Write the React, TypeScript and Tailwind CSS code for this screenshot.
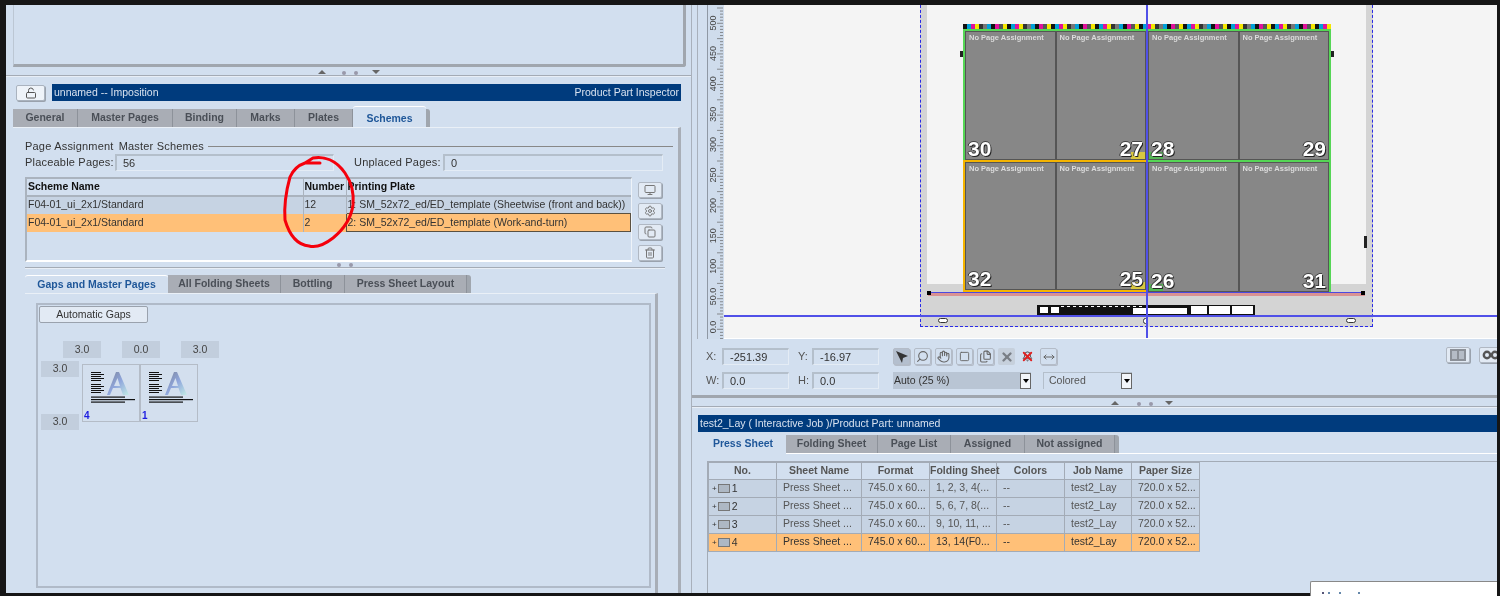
import React from "react";
import { LockOpen, Monitor, Settings, Copy, Trash2, Search, Hand, Square, Files, X, Bell, MoveHorizontal } from "lucide-react";

const pressRows = [
    { no: 1, fold: "1, 2, 3, 4(..." },
    { no: 2, fold: "5, 6, 7, 8(..." },
    { no: 3, fold: "9, 10, 11, ..." },
    { no: 4, fold: "13, 14(F0...", selected: true },
];

const rulerLabels = ["500", "450", "400", "350", "300", "250", "200", "150", "100", "50.0", "0.0"];
const barColors = ["#111", "#00a0d8", "#e0109a", "#f5e600", "#333", "#777", "#00a0d8", "#111", "#e0109a", "#555", "#f5e600"];

function Field({ className, children }: { className: string; children?: React.ReactNode }) {
    return (
        <div className={`flex h-[17px] items-center border-t-2 border-l-2 border-t-[#b4bfcb] border-l-[#b4bfcb] border-b border-r border-b-[#e4ecf5] border-r-[#e4ecf5] pl-1.5 text-[11px] text-[#333] ${className}`}>
            {children}
        </div>
    );
}

function Tab({ label, width, active }: { label: string; width: string; active?: boolean }) {
    if (active) {
        return (
            <div className={`relative flex h-[21px] items-center justify-center rounded-t-[3px] border-t border-white bg-[#d2dfef] pt-[3px] text-[10.5px] font-bold text-[#1f5799] ${width}`}>
                {label}
            </div>
        );
    }
    return (
        <div className={`flex h-[18px] items-center justify-center border-r border-[#8d929a] bg-[#a9adb5] text-[10.5px] font-bold text-[#4a4f57] ${width}`}>
            {label}
        </div>
    );
}

function Splitter({ className, up, dots, down }: { className: string; up: string; dots: string; down: string }) {
    return (
        <div className={`relative ${className}`}>
            <div className="absolute top-[8px] right-0 left-0 h-[2px] border-t border-[#a4abb5] bg-[#e8eef6]" />
            <div className={`absolute top-[3px] h-0 w-0 border-r-[4px] border-b-[4px] border-l-[4px] border-r-transparent border-b-[#666] border-l-transparent ${up}`} />
            <div className={`absolute top-[4px] h-[2px] w-[16px] border-x-4 border-dotted border-[#99a] ${dots}`} />
            <div className={`absolute top-[3px] h-0 w-0 border-t-[4px] border-r-[4px] border-l-[4px] border-t-[#666] border-r-transparent border-l-transparent ${down}`} />
        </div>
    );
}

function IconButton({ children, className = "" }: { children: React.ReactNode; className?: string }) {
    return (
        <div className={`flex h-[17px] w-[17px] items-center justify-center rounded-[2px] border border-[#b4bcc8] text-[#666] shadow-[1px_1px_0_#b4bcc8] ${className}`}>
            {children}
        </div>
    );
}

function SideButton({ children }: { children: React.ReactNode }) {
    return (
        <div className="flex h-[16px] w-[24px] items-center justify-center rounded-[2px] border border-[#b0b8c3] bg-[#e2eaf4] text-[#777] shadow-[1px_1px_0_#9aa2ad]">
            {children}
        </div>
    );
}

function Thumb({ n }: { n: number }) {
    return (
        <div className="relative h-[58px] w-[58px] border border-[#b4bcc7] bg-[#d3dfee]">
            <svg className="absolute top-[5px] left-[7px]" width="46" height="36" viewBox="0 0 46 36">
                <defs>
                    <linearGradient id={`a${n}`} x1="0" y1="0" x2="1" y2="1">
                        <stop offset="0" stopColor="#7c8398" />
                        <stop offset="0.5" stopColor="#8fa6dc" />
                        <stop offset="1" stopColor="#c4ecE6" />
                    </linearGradient>
                </defs>
                <path d="M26 2 L29 2 L39 25 L33 25 L30.5 18 L23 18 L20 25 L17 25 Z M24 16 L30 16 L27.5 8 Z" fill={`url(#a${n})`} fillRule="evenodd" />
                <g fill="#111">
                    {[2, 4, 6, 8, 10, 14, 16, 18, 20, 22].map(y => (
                        <rect key={y} x="1" y={y} width={y % 4 === 0 ? 13 : 10} height="1" />
                    ))}
                    {[26.5, 29, 31.5].map(y => (
                        <rect key={y} x="1" y={y} width={y === 29 ? 44 : 34} height="1.2" />
                    ))}
                </g>
            </svg>
            <span className="absolute bottom-0 left-[1px] text-[10px] leading-[11px] font-bold text-[#1c1ce0]">{n}</span>
        </div>
    );
}

function Page({ num, right, corner }: { num: number; right?: boolean; corner?: string }) {
    return (
        <div className="relative h-full flex-1 border border-[#555] bg-[#878787]">
            <div className="pt-[1px] pl-[3px] text-[7.5px] leading-[9px] font-bold whitespace-nowrap text-[#dcdcdc]">No Page Assignment</div>
            {corner && (
                <div className={`absolute bottom-0 h-[7px] w-[14px] ${corner} ${right ? "right-0" : "left-0"}`} />
            )}
            <div className={`absolute bottom-[-1px] text-[21px] leading-[23px] font-bold text-white [text-shadow:1px_1px_0_#222,-1px_0_0_#333,0_-1px_0_#444] ${right ? "right-[2px]" : "left-[2px]"}`}>
                {num}
            </div>
        </div>
    );
}

function Block({ a, b, border, ca, cb }: { a: number; b: number; border: string; ca?: string; cb?: string }) {
    return (
        <div className={`flex h-full flex-1 ${border}`}>
            <Page num={a} corner={ca} />
            <Page num={b} right corner={cb} />
        </div>
    );
}

export default function App() {
    return (
        <div className="h-[596px] w-[1500px] overflow-hidden bg-[#161616] pt-[5px] pr-[3px] pb-[3px] pl-[6px] font-['Liberation_Sans',Arial,sans-serif] blur-[0.45px]">
            <div className="relative flex h-full bg-[#d2dfef]">
                {/* Left: imposition inspector */}
                <div className="h-full w-[685px] shrink-0 overflow-hidden pl-[7px]">
                    <div className="h-[62px] w-[673px] rounded-br-[3px] border-r-[3px] border-b-[3px] border-l border-[#a0a6ae] border-l-[#bcc7d4]" />
                    <Splitter className="-ml-[7px] h-[17px]" up="left-[312px]" dots="left-[336px]" down="left-[366px]" />

                    <div className="flex h-[17px] items-center">
                        <div className="ml-[3px] flex h-[16px] w-[29px] items-center justify-center rounded-[2px] border border-[#aab3bf] bg-[#eef3f9] text-[#555] shadow-[1px_1px_0_#9aa2ad]">
                            <LockOpen size={12} />
                        </div>
                        <div className="ml-[7px] flex h-[17px] w-[629px] items-center justify-between bg-[#003b7d] px-[2px] text-[10.5px] text-[#d8e2ef]">
                            <span>unnamed -- Imposition</span>
                            <span>Product Part Inspector</span>
                        </div>
                    </div>

                    <div className="mt-[5px] flex h-[21px] items-end">
                        <Tab label="General" width="w-[65px]" />
                        <Tab label="Master Pages" width="w-[95px]" />
                        <Tab label="Binding" width="w-[64px]" />
                        <Tab label="Marks" width="w-[58px]" />
                        <Tab label="Plates" width="w-[58px]" />
                        <Tab label="Schemes" width="w-[73px]" active />
                        <div className="h-[18px] w-[4px] rounded-tr-[3px] bg-[#a0a6ae]" />
                    </div>

                    <div className="h-[470px] w-[668px] border-t border-r-[3px] border-t-[#eaf0f7] border-r-[#a8aeb7] pl-[12px]">
                        <div className="mt-[12px] flex h-[12px] items-center text-[11px] tracking-[0.2px] text-[#333]">
                            <span>Page Assignment</span>
                            <span className="ml-[5px]">Master Schemes</span>
                            <div className="ml-[4px] h-px w-[465px] bg-[#888]" />
                        </div>

                        <div className="mt-[2px] flex h-[17px] items-center text-[11px] text-[#333]">
                            <span className="w-[90px] tracking-[0.2px]">Placeable Pages:</span>
                            <Field className="w-[219px]">56</Field>
                            <span className="ml-[20px] w-[89px] tracking-[0.2px]">Unplaced Pages:</span>
                            <Field className="w-[220px]">0</Field>
                        </div>

                        <div className="mt-[6px] flex">
                            <div className="h-[85px] w-[607px] border-t-2 border-l-2 border-t-[#aab3be] border-l-[#aab3be] border-r border-b-2 border-r-[#eef3f9] border-b-white">
                                <table className="w-full table-fixed border-collapse text-[10.5px] text-[#333]">
                                    <colgroup>
                                        <col className="w-[276px]" />
                                        <col className="w-[43px]" />
                                        <col />
                                    </colgroup>
                                    <thead>
                                        <tr className="h-[16px] border-b-2 border-[#aab3be] text-left font-bold text-[#111]">
                                            <th className="pl-[1px]">Scheme Name</th>
                                            <th className="border-l border-[#aab3be] pl-[1px]">Number</th>
                                            <th className="border-l border-[#aab3be] pl-[1px]">Printing Plate</th>
                                        </tr>
                                    </thead>
                                    <tbody>
                                        <tr className="h-[18px] bg-[#c6d3e3]">
                                            <td className="pl-[1px]">F04-01_ui_2x1/Standard</td>
                                            <td className="border-l border-[#aab3be] pl-[1px]">12</td>
                                            <td className="border-l border-[#aab3be] pl-[1px]">1: SM_52x72_ed/ED_template (Sheetwise (front and back))</td>
                                        </tr>
                                        <tr className="h-[18px] bg-[#ffc078]">
                                            <td className="pl-[1px]">F04-01_ui_2x1/Standard</td>
                                            <td className="border-l border-[#aab3be] pl-[1px]">2</td>
                                            <td className="border border-[#5a5040] pl-[1px]">2: SM_52x72_ed/ED_template (Work-and-turn)</td>
                                        </tr>
                                    </tbody>
                                </table>
                            </div>
                            <div className="mt-[5px] ml-[6px] flex flex-col gap-[5px]">
                                <SideButton><Monitor size={12} /></SideButton>
                                <SideButton><Settings size={12} /></SideButton>
                                <SideButton><Copy size={12} /></SideButton>
                                <SideButton><Trash2 size={12} /></SideButton>
                            </div>
                        </div>

                        <div className="relative h-[13px] w-[640px]">
                            <div className="absolute top-[5px] right-0 left-0 h-[2px] border-t border-[#a4abb5] bg-[#e8eef6]" />
                            <div className="absolute top-[1px] left-[312px] h-[2px] w-[16px] border-x-4 border-dotted border-[#99a]" />
                        </div>

                        <div className="flex h-[18px] items-end">
                            <div className="flex h-[18px] w-[143px] items-center justify-center rounded-t-[3px] border-t border-white bg-[#d2dfef] text-[10.5px] font-bold text-[#1f5799]">Gaps and Master Pages</div>
                            <Tab label="All Folding Sheets" width="w-[113px]" />
                            <Tab label="Bottling" width="w-[64px]" />
                            <Tab label="Press Sheet Layout" width="w-[122px]" />
                            <div className="h-[18px] w-[4px] rounded-tr-[3px] bg-[#a0a6ae]" />
                        </div>

                        <div className="h-[300px] w-[633px] border-t border-r-[3px] border-t-[#eaf0f7] border-r-[#a8aeb7] pt-[9px] pl-[11px]">
                            <div className="h-[285px] w-[615px] border-2 border-[#b0bac8] pt-[1px] pl-[1px]">
                                <div className="flex h-[17px] w-[109px] items-center justify-center rounded-[2px] border border-[#9aa2ad] bg-[#e2eaf4] text-[10.5px] text-[#333]">Automatic Gaps</div>
                                <div className="mt-[18px] ml-[24px] flex gap-[21px]">
                                    <div className="flex h-[17px] w-[38px] items-center justify-center bg-[#c2cedd] text-[10.5px] text-[#444]">3.0</div>
                                    <div className="flex h-[17px] w-[38px] items-center justify-center bg-[#c2cedd] text-[10.5px] text-[#444]">0.0</div>
                                    <div className="flex h-[17px] w-[38px] items-center justify-center bg-[#c2cedd] text-[10.5px] text-[#444]">3.0</div>
                                </div>
                                <div className="mt-[3px] ml-[2px] flex">
                                    <div className="flex h-[69px] w-[38px] flex-col justify-between">
                                        <div className="flex h-[16px] items-center justify-center bg-[#c2cedd] text-[10.5px] text-[#444]">3.0</div>
                                        <div className="flex h-[16px] items-center justify-center bg-[#c2cedd] text-[10.5px] text-[#444]">3.0</div>
                                    </div>
                                    <div className="mt-[3px] ml-[3px] flex">
                                        <Thumb n={4} />
                                        <Thumb n={1} />
                                    </div>
                                </div>
                            </div>
                        </div>
                    </div>
                </div>

                {/* Right: sheet preview and list */}
                <div className="h-full flex-1 overflow-hidden border-l border-[#a8b0bb]">
                    <div className="h-[393px] border-b-[3px] border-[#a0a6ae] pl-[5px]">
                        <div className="flex h-[334px] border-l border-[#a8b0bb]">
                            <div className="relative ml-[9px] h-full w-[17px] shrink-0 border-l border-[#8f98a4] bg-[#cfdcec]">
                                <svg className="absolute top-0 left-0" width="17" height="334">
                                    {Array.from({ length: 110 }).map((_, i) => (
                                        <line key={i} x1={i % 5 === 0 ? 9 : 12} x2="15" y1={i * 3.06 + 3} y2={i * 3.06 + 3} stroke="#666" strokeWidth="0.7" />
                                    ))}
                                    {rulerLabels.map((t, i) => (
                                        <text key={t} transform={`translate(8 ${18 + i * 30.4}) rotate(-90)`} textAnchor="middle" fontSize="9" fill="#444" fontFamily="Liberation Sans">{t}</text>
                                    ))}
                                </svg>
                            </div>

                            <div className="relative h-full flex-1 overflow-hidden border-b border-white bg-[#f4f4f4]">
                                {/* sheet */}
                                <div className="absolute -top-[10px] left-[196px] h-[332px] w-[453px] border-x border-b border-dashed border-[#2a2ae6] bg-[#d4d4d4]">
                                    <div className="absolute top-0 left-[6px] h-[289px] w-[439px] bg-[#f4f4f4]" />
                                </div>
                                <svg className="absolute top-[19px] left-[239px]" width="368" height="5">
                                    {Array.from({ length: 92 }).map((_, i) => (
                                        <rect key={i} x={i * 4} y="0" width="4" height="5" fill={barColors[i % barColors.length]} />
                                    ))}
                                </svg>
                                <div className="absolute top-[24px] left-[239px] flex h-[131px] w-[368px]">
                                    <Block a={30} b={27} border="border-x-2 border-t-2 border-[#55d655] border-r-[#3c8f8f]" cb="bg-[#d8c840]" />
                                    <Block a={28} b={29} border="border-r-2 border-t-2 border-[#55d655]" ca="bg-[#55b855]" />
                                </div>
                                <div className="absolute top-[155px] left-[239px] flex h-[132px] w-[368px]">
                                    <Block a={32} b={25} border="border-2 border-[#f5b400]" cb="bg-[#d8c840]" />
                                    <Block a={26} b={31} border="border-r-2 border-t-2 border-[#55d655]" ca="bg-[#55b855]" />
                                </div>
                                <div className="absolute top-[287px] left-[204px] h-[4px] w-[437px] border-t border-[#4a4ae0] bg-[#d99292]" />
                                <div className="absolute top-[286px] left-[203px] h-[4px] w-[4px] bg-black" />
                                <div className="absolute top-[286px] left-[637px] h-[4px] w-[4px] bg-black" />
                                <div className="absolute top-[46px] left-[236px] h-[6px] w-[3px] bg-[#222]" />
                                <div className="absolute top-[46px] left-[607px] h-[6px] w-[3px] bg-[#222]" />
                                <div className="absolute top-[231px] left-[640px] h-[12px] w-[3px] bg-[#222]" />

                                {/* slug line */}
                                <svg className="absolute top-[300px] left-[313px]" width="218" height="10">
                                    <rect width="218" height="10" fill="#111" />
                                    <rect x="3" y="2" width="8" height="6" fill="#fff" />
                                    <rect x="14" y="2" width="8" height="6" fill="#fff" />
                                    {Array.from({ length: 14 }).map((_, i) => (
                                        <rect key={i} x={24 + i * 6} y="1" width="3" height="1" fill="#fff" />
                                    ))}
                                    <rect x="96" y="3" width="54" height="6" fill="#fff" />
                                    <rect x="154" y="1" width="16" height="8" fill="#fff" />
                                    <rect x="172" y="1" width="21" height="8" fill="#fff" />
                                    <rect x="195" y="1" width="21" height="8" fill="#fff" />
                                </svg>
                                <div className="absolute top-[313px] left-[214px] h-[5px] w-[10px] rounded-full border border-[#333] bg-white" />
                                <div className="absolute top-[313px] left-[419px] h-[6px] w-[5px] rounded-full border border-[#333] bg-white" />
                                <div className="absolute top-[313px] left-[622px] h-[5px] w-[10px] rounded-full border border-[#333] bg-white" />

                                {/* crosshair */}
                                <div className="absolute top-0 bottom-0 left-[422px] w-[1.5px] bg-[#5050e8]" />
                                <div className="absolute top-[310px] right-0 left-0 h-[1.5px] bg-[#5050e8]" />
                            </div>
                        </div>

                        <div className="-ml-[5px] flex h-[56px] pl-[14px]">
                            <div className="pt-[9px] text-[11px] text-[#555]">
                                <div className="flex h-[17px] items-center">
                                    <span className="w-[16px]">X:</span>
                                    <Field className="w-[67px]">-251.39</Field>
                                    <span className="ml-[9px] w-[14px]">Y:</span>
                                    <Field className="w-[67px]">-16.97</Field>
                                </div>
                                <div className="mt-[7px] flex h-[17px] items-center">
                                    <span className="w-[16px]">W:</span>
                                    <Field className="w-[67px]">0.0</Field>
                                    <span className="ml-[9px] w-[14px]">H:</span>
                                    <Field className="w-[67px]">0.0</Field>
                                </div>
                            </div>

                            <div className="ml-[14px] pt-[9px]">
                                <div className="flex h-[17px] gap-[4px]">
                                    <IconButton className="bg-[#b4bfce]">
                                        <svg width="14" height="14" viewBox="0 0 14 14"><path d="M1 1 L13 6 L8 8 L7 13 Z" fill="#333" /></svg>
                                    </IconButton>
                                    <IconButton><Search size={13} className="-scale-x-100" /></IconButton>
                                    <IconButton><Hand size={13} /></IconButton>
                                    <IconButton><Square size={11} /></IconButton>
                                    <IconButton><Files size={13} /></IconButton>
                                    <IconButton className="border-transparent bg-[#c6d0dc] shadow-none"><X size={14} strokeWidth={4} className="text-[#7a7f86]" /></IconButton>
                                    <IconButton className="relative border-transparent shadow-none">
                                        <Bell size={11} className="text-[#444]" />
                                        <X size={15} strokeWidth={3} className="absolute text-[#e02020]" />
                                    </IconButton>
                                    <IconButton><MoveHorizontal size={12} /></IconButton>
                                </div>
                                <div className="mt-[7px] flex text-[10.5px] text-[#333]">
                                    <div className="flex h-[17px] w-[138px] items-center justify-between bg-[#b9c5d4] pl-[1px]">
                                        <span>Auto (25 %)</span>
                                        <span className="flex h-[16px] w-[11px] items-center justify-center border border-[#666] bg-[#f2f5f9]">
                                            <span className="h-0 w-0 border-t-[4px] border-r-[3px] border-l-[3px] border-t-black border-r-transparent border-l-transparent" />
                                        </span>
                                    </div>
                                    <div className="ml-[12px] flex h-[17px] w-[89px] items-center justify-between border-t border-l border-[#b4bfcb] pl-[5px] text-[#555]">
                                        <span>Colored</span>
                                        <span className="flex h-[16px] w-[11px] items-center justify-center border border-[#666] bg-[#f2f5f9]">
                                            <span className="h-0 w-0 border-t-[4px] border-r-[3px] border-l-[3px] border-t-black border-r-transparent border-l-transparent" />
                                        </span>
                                    </div>
                                </div>
                            </div>

                            <div className="ml-auto flex gap-[9px] pt-[8px]">
                                <SideButton>
                                    <svg width="16" height="12" viewBox="0 0 16 12">
                                        <rect width="16" height="12" fill="#8b9098" />
                                        <rect x="2" y="2" width="5" height="8" fill="#b5bcc6" />
                                        <rect x="9" y="2" width="5" height="8" fill="#b5bcc6" />
                                    </svg>
                                </SideButton>
                                <div className="-mr-[6px]">
                                    <SideButton>
                                        <svg width="18" height="10" viewBox="0 0 18 10">
                                            <circle cx="5" cy="5" r="3.2" fill="none" stroke="#555" strokeWidth="2.4" />
                                            <circle cx="13" cy="5" r="3.2" fill="none" stroke="#555" strokeWidth="2.4" />
                                        </svg>
                                    </SideButton>
                                </div>
                            </div>
                        </div>
                    </div>

                    <Splitter className="h-[17px]" up="left-[419px]" dots="left-[445px]" down="left-[473px]" />

                    <div className="ml-[6px] flex h-[17px] items-center bg-[#003b7d] pl-[2px] text-[10.5px] text-[#d8e2ef]">
                        test2_Lay ( Interactive Job )/Product Part: unnamed
                    </div>

                    <div className="mt-[3px] ml-[8px] flex h-[18px] items-end">
                        <div className="flex h-[18px] w-[86px] items-center justify-center text-[10.5px] font-bold text-[#1f5799]">Press Sheet</div>
                        <Tab label="Folding Sheet" width="w-[92px]" />
                        <Tab label="Page List" width="w-[73px]" />
                        <Tab label="Assigned" width="w-[74px]" />
                        <Tab label="Not assigned" width="w-[90px]" />
                        <div className="h-[18px] w-[4px] rounded-tr-[3px] bg-[#a0a6ae]" />
                    </div>
                    <div className="ml-[94px] h-px bg-white" />

                    <div className="mt-[7px] ml-[15px] h-[140px] border-t border-l border-[#a3abb6]">
                        <table className="w-[491px] table-fixed border-collapse text-[10.5px] text-[#555]">
                            <colgroup>
                                <col className="w-[68px]" />
                                <col className="w-[85px]" />
                                <col className="w-[68px]" />
                                <col className="w-[67px]" />
                                <col className="w-[68px]" />
                                <col className="w-[67px]" />
                                <col className="w-[68px]" />
                            </colgroup>
                            <thead>
                                <tr className="h-[17px] font-bold">
                                    {["No.", "Sheet Name", "Format", "Folding Sheet", "Colors", "Job Name", "Paper Size"].map(h => (
                                        <th key={h} className="border border-[#a3abb6] whitespace-nowrap">{h}</th>
                                    ))}
                                </tr>
                            </thead>
                            <tbody>
                                {pressRows.map(r => {
                                    const cell = "border border-[#a3abb6] pl-[6px] pb-[1px] whitespace-nowrap";
                                    return (
                                        <tr key={r.no} className={r.selected ? "h-[18px] bg-[#ffc078] text-[#333]" : "h-[18px] bg-[#c6d3e3]"}>
                                            <td className="border border-[#a3abb6] pl-[3px] text-[#333]">
                                                <span className="flex items-center gap-[1px]">
                                                    <span className="text-[8px]">+</span>
                                                    <span className="h-[9px] w-[12px] border border-[#777] bg-[#aeb8c4]" />
                                                    <span className="ml-[1px]">{r.no}</span>
                                                </span>
                                            </td>
                                            <td className={cell}>Press Sheet ...</td>
                                            <td className={cell}>745.0 x 60...</td>
                                            <td className={cell}>{r.fold}</td>
                                            <td className={cell}>--</td>
                                            <td className={cell}>test2_Lay</td>
                                            <td className={cell}>720.0 x 52...</td>
                                        </tr>
                                    );
                                })}
                            </tbody>
                        </table>
                    </div>
                </div>

                {/* popup peeking in at the bottom */}
                <div className="absolute top-[576px] right-0 flex h-[20px] w-[187px] items-start gap-[4px] rounded-tl-[2px] border-t border-l border-[#888] bg-white pt-[10px] pl-[11px]">
                    <div className="h-[2px] w-[2px] bg-[#557]" />
                    <div className="h-[2px] w-[2px] bg-[#68a]" />
                    <div className="ml-[5px] h-[2px] w-[2px] bg-[#68a]" />
                    <div className="ml-[13px] h-[2px] w-[2px] bg-[#68a]" />
                </div>

                {/* red marker circle drawn on the screenshot */}
                <svg className="pointer-events-none absolute top-0 left-0" width="700" height="300">
                    <path
                        d="M314 158 L299 158 L307 153 C318 151 330 155 339 168 C346 178 348 190 347 200 C345 214 338 224 327 233 C318 240 310 243 303 241 C292 240 284 232 279 215 C278 202 279 190 284 172 C288 163 293 160 299 158"
                        fill="none"
                        stroke="#f5000c"
                        strokeWidth="3"
                        strokeLinecap="round"
                        strokeLinejoin="round"
                    />
                </svg>
            </div>
        </div>
    );
}
